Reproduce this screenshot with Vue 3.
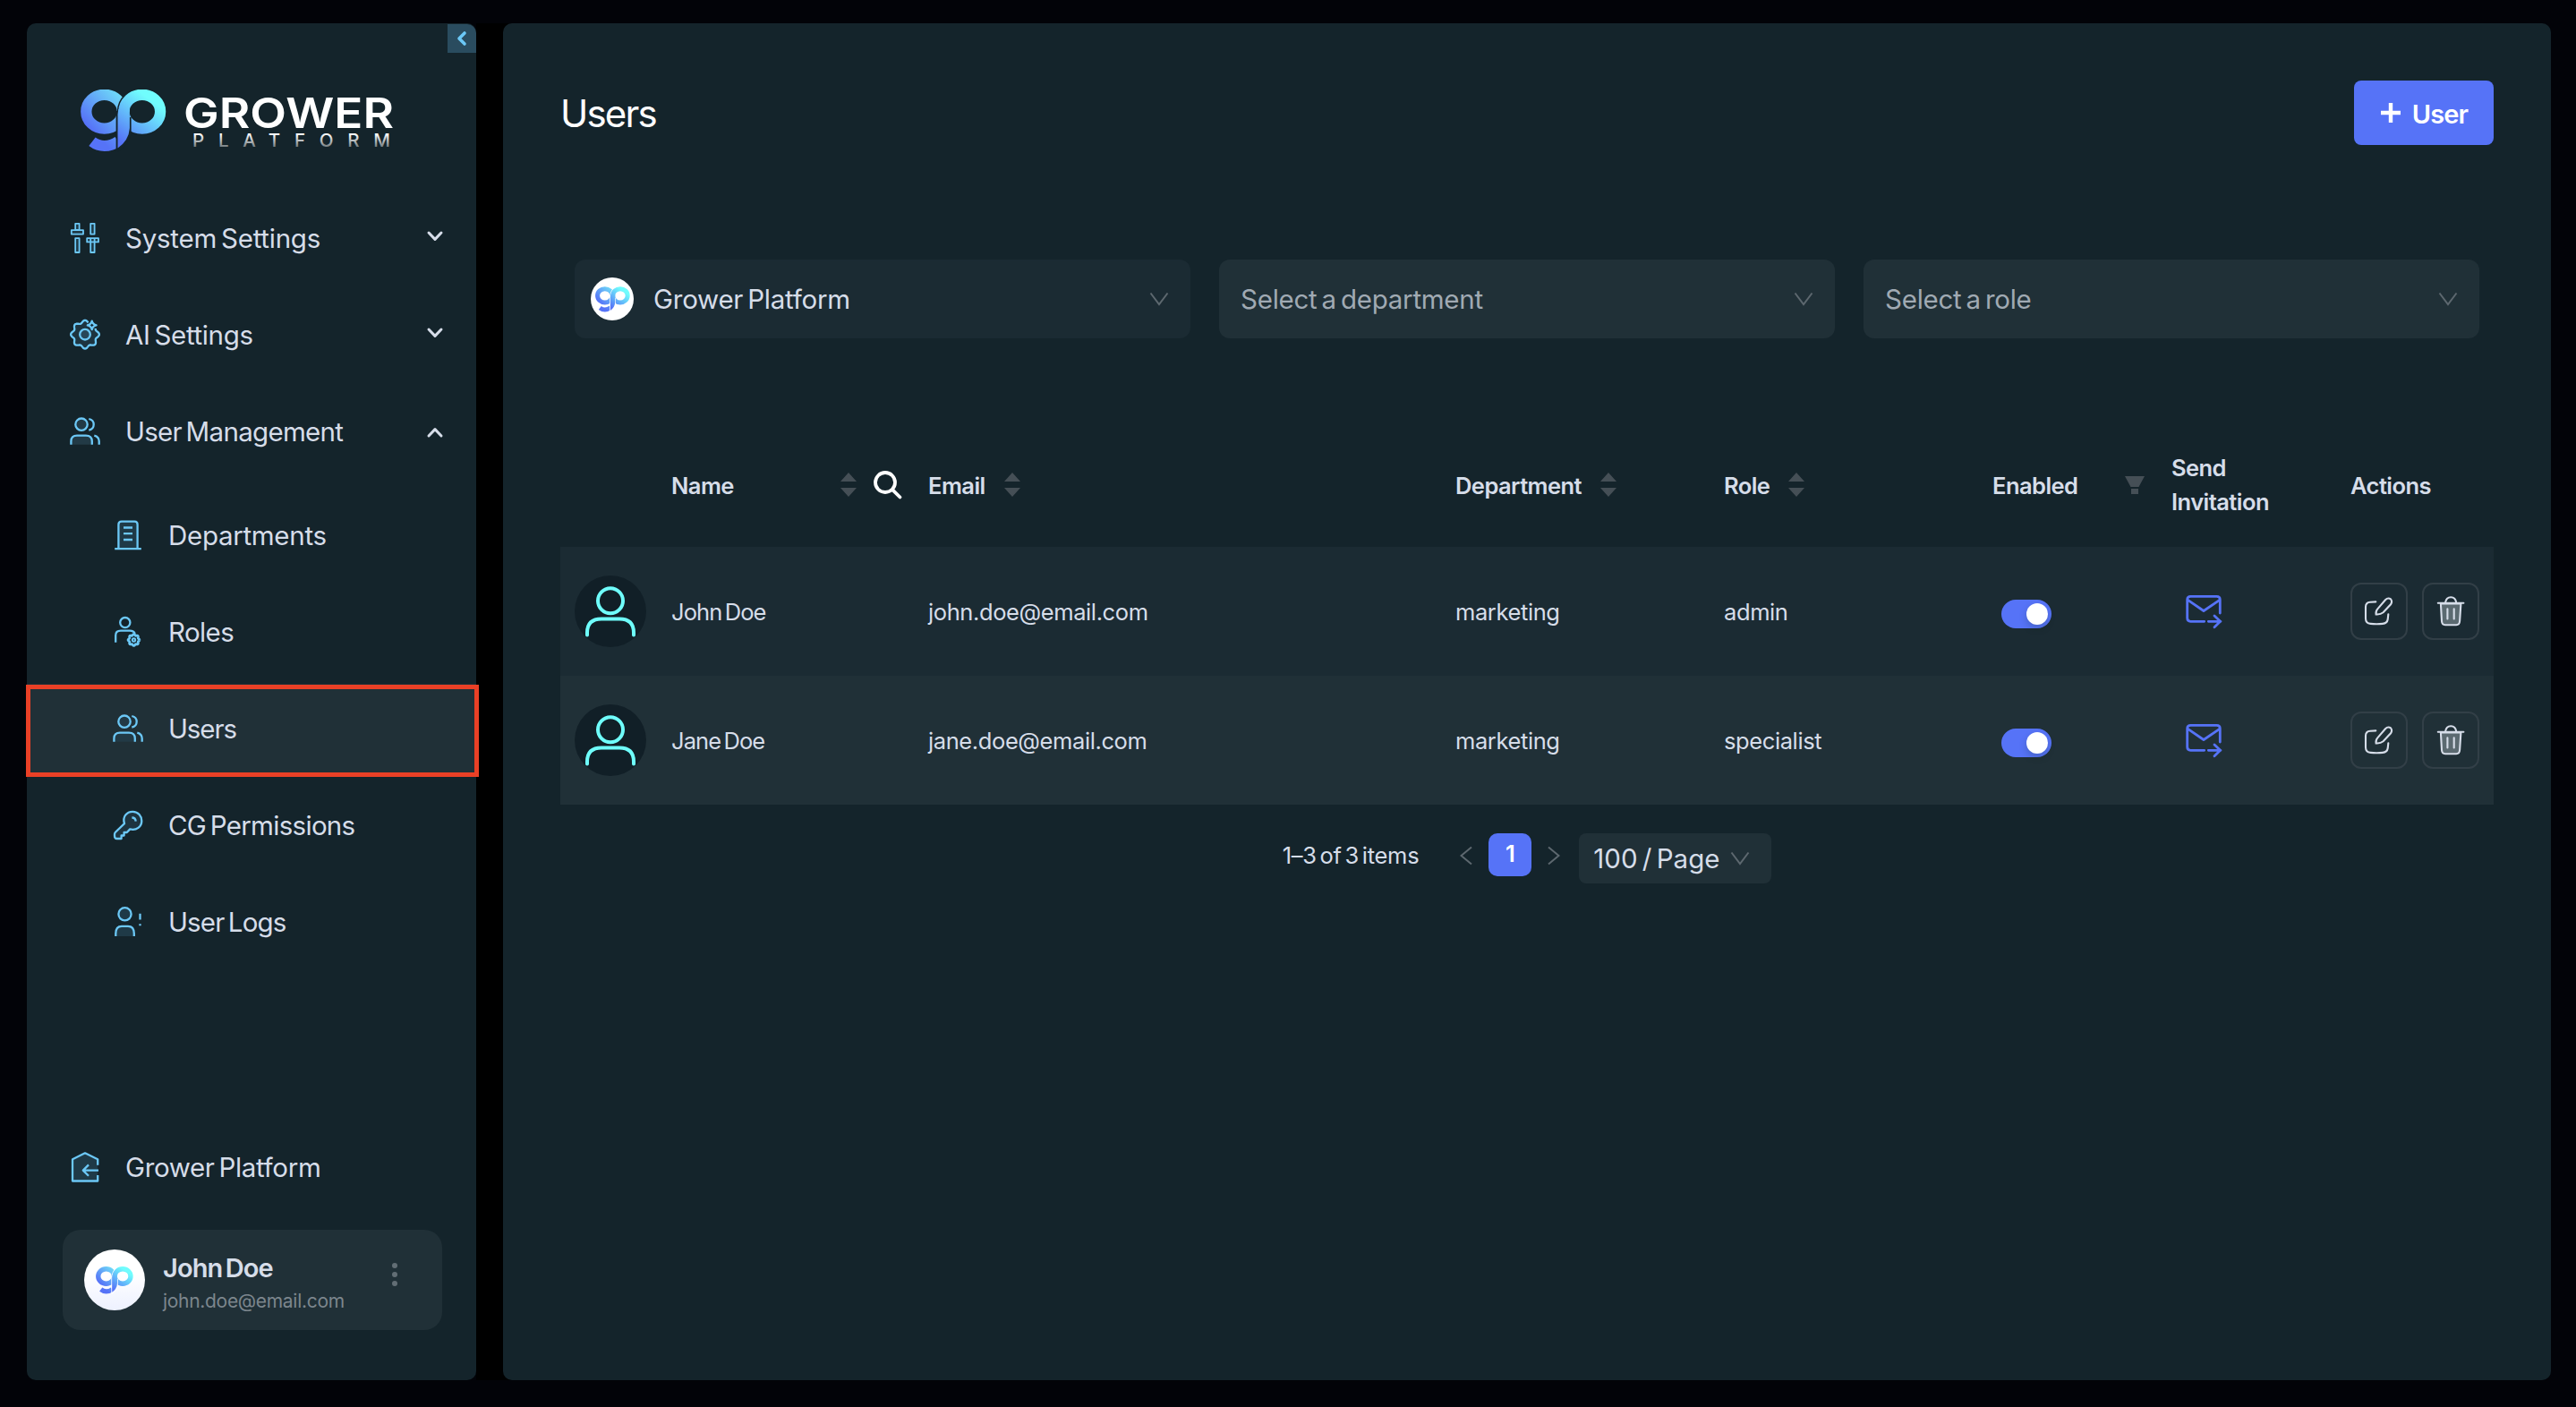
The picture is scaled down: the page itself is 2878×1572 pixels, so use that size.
<template>
  <div class="page">
    <svg class="sprite" aria-hidden="true">
      <defs>
        <linearGradient id="grad-g" gradientUnits="userSpaceOnUse" x1="8" y1="40" x2="46" y2="4">
          <stop offset="0" stop-color="#5673f7" />
          <stop offset="1" stop-color="#70dff8" />
        </linearGradient>
        <linearGradient id="grad-p" gradientUnits="userSpaceOnUse" x1="42" y1="56" x2="76" y2="10">
          <stop offset="0" stop-color="#5673f7" />
          <stop offset="1" stop-color="#70fdfd" />
        </linearGradient>
        <linearGradient id="grad-text" x1="0" y1="0" x2="0" y2="1">
          <stop offset="0.25" stop-color="#ffffff" />
          <stop offset="0.85" stop-color="#6f787c" />
        </linearGradient>
      </defs>

      <symbol id="mark" viewBox="0 0 96 70">
        <g fill="none">
          <ellipse cx="26.6" cy="24.7" rx="20.3" ry="18.9" stroke="url(#grad-g)" stroke-width="12.3" />
          <path d="M13 58.3 C21 64.5 32 64.8 42 58" stroke="url(#grad-g)" stroke-width="12" />
          <ellipse cx="68.8" cy="24.7" rx="20.3" ry="18.9" stroke="currentColor" stroke-width="15.5" />
          <ellipse cx="68.8" cy="24.7" rx="20.3" ry="18.9" stroke="url(#grad-p)" stroke-width="12.3" />
        </g>
        <path d="M39.6 24 H44 V70 H39.6 Z" fill="currentColor" />
        <path d="M44 24.7 H55 V31 H56.6 V50 C54 60 48 66 41 70 Z" fill="currentColor" />
        <path d="M41.5 65.5 V28 L42.3 22 H54.9 V43 Q54 57 41.5 65.5 Z" fill="url(#grad-p)" />
      </symbol>

      <symbol id="sliders" viewBox="0 0 40 40">
        <g stroke-width="1.8" fill="#1f3a47">
          <path d="M9.2 3.8 H13.6 V11 H9.2 Z M9.2 20.2 H13.6 V36 H9.2 Z M4.8 11.2 H18 V15.6 H4.8 Z" />
          <path d="M26.2 3.8 H30.6 V15.6 H26.2 Z M26.2 24.4 H30.6 V36 H26.2 Z M22.2 20.2 H35 V24.4 H22.2 Z M26.2 20.2 V24.4 M30.6 20.2 V24.4" />
        </g>
      </symbol>
      <symbol id="gear" viewBox="0 0 40 40">
        <path :d="bigGear" fill="#1d3440" />
        <circle cx="20" cy="19.7" r="5.8" fill="#28475a" />
        <path d="M27.7 4.6 Q28.5 8.5 32.6 9.4 Q28.5 10.3 27.7 14.2 Q26.9 10.3 22.8 9.4 Q26.9 8.5 27.7 4.6 Z" />
      </symbol>
      <symbol id="users" viewBox="0 0 40 40">
        <circle cx="16" cy="12.2" r="6.7" fill="#223a46" />
        <path d="M4.4 34.7 V31 Q4.4 24.6 11 24.6 H21 Q27.8 24.6 27.8 31 V34.7" fill="#223a46" />
        <path d="M24.3 6 C31.5 7.6 31.5 17 24.3 18.6 M30.3 24.6 Q35.7 26 35.7 31 V34.7" />
      </symbol>
      <symbol id="building" viewBox="0 0 40 40">
        <path d="M9.4 35.2 V8 Q9.4 4.6 12.8 4.6 H27.4 Q30.6 4.6 30.6 8 V35.2" fill="#1f3a47" />
        <path d="M5.2 35.2 H34.8 M15 11.5 H25 M15 18.2 H25 M15 25 H25" />
      </symbol>
      <symbol id="role" viewBox="0 0 40 40">
        <circle cx="16.8" cy="9.6" r="5.6" />
        <path d="M6.2 31.7 V24 Q6.2 18.7 12 18.7 H22 Q26.5 18.7 27.8 22" />
        <path :d="smallGear" stroke-width="2.8" />
        <circle cx="26.5" cy="29" r="1.7" stroke-width="2" />
      </symbol>
      <symbol id="key" viewBox="0 0 40 40">
        <path d="M16 18.2 C13.5 10.5 18.5 4.8 25.3 4.8 C31.5 4.8 35.3 10 35.3 15.2 C35.3 21.5 29.5 26.3 22.2 24.4 L18.8 28 H15.6 V31.5 H12.6 V35 H7.5 Q5 35 5 32 V30 Q5 28.8 6 27.8 Z" fill="#1d3440" />
        <path d="M24.4 11.5 Q28.4 11.5 28.7 15.6" />
      </symbol>
      <symbol id="log" viewBox="0 0 40 40">
        <circle cx="16.5" cy="11.3" r="7.1" fill="#1f3a47" />
        <path d="M6.3 36 V33 Q6.3 24.8 13 24.8 H20 Q26.8 24.8 26.8 33 V36" fill="#1f3a47" />
        <path d="M33.5 10.7 V17.4 M33.5 22.3 V24.3" />
      </symbol>
      <symbol id="home" viewBox="0 0 40 40">
        <path d="M34.2 17.8 V11.2 L20 4.3 L6 11.2 V35.5 H34.2 V29" fill="#1f3a47" />
        <path d="M35 23.6 H18 M24 17.4 L17.8 23.6 L24 29.8" />
      </symbol>
    </svg>

    <aside class="sidebar">
      <button class="collapse">
        <svg width="14" height="18" viewBox="0 0 14 18"><path d="M10 3 L4 9 L10 15" stroke="#6cc8f6" stroke-width="3.6" stroke-linecap="round" stroke-linejoin="round" fill="none" /></svg>
      </button>

      <div class="logo">
        <svg class="logo-mark" width="96" height="70"><use href="#mark" /></svg>
        <svg class="logo-text" width="240" height="70" viewBox="0 0 240 70">
          <text class="logo-name" x="1" y="43" textLength="235" lengthAdjust="spacingAndGlyphs">GROWER</text>
          <text class="logo-sub" x="11" y="63.5" textLength="221">PLATFORM</text>
        </svg>
      </div>

      <nav>
        <div v-for="item in menu" :key="item.label" class="item">
          <svg class="icon" width="40" height="40"><use :href="'#' + item.icon" /></svg>
          <span class="label" :style="{ letterSpacing: item.tracking + 'px' }">{{ item.label }}</span>
          <svg class="caret" :class="{ open: item.open }" width="20" height="14" viewBox="0 0 20 14">
            <path d="M3 3 L10 10.4 L17 3" />
          </svg>
        </div>
        <div class="submenu">
          <div v-for="item in submenu" :key="item.label" class="item sub" :class="{ active: item.active }">
            <svg class="icon" width="40" height="40"><use :href="'#' + item.icon" /></svg>
            <span class="label" :style="{ letterSpacing: item.tracking + 'px' }">{{ item.label }}</span>
          </div>
        </div>
      </nav>

      <div class="bottom">
        <div class="item">
          <svg class="icon" width="40" height="40"><use href="#home" /></svg>
          <span class="label">Grower Platform</span>
        </div>
        <div class="profile">
          <span class="brand-avatar large"><svg width="42" height="31"><use href="#mark" /></svg></span>
          <div class="profile-text">
            <strong>John Doe</strong>
            <small>john.doe@email.com</small>
          </div>
          <svg class="dots" width="8" height="28" viewBox="0 0 8 28">
            <circle cx="4" cy="4" r="3" /><circle cx="4" cy="14" r="3" /><circle cx="4" cy="24" r="3" />
          </svg>
        </div>
      </div>
    </aside>

    <main class="content">
      <header class="title-bar">
        <h1>Users</h1>
        <button class="add">
          <svg width="24" height="24" viewBox="0 0 24 24"><path d="M12 1 V23 M1 12 H23" stroke="#fff" stroke-width="4.4" /></svg>
          <span>User</span>
        </button>
      </header>

      <div class="filters">
        <div v-for="f in filters" :key="f.text" class="select" :class="{ chosen: f.chosen }">
          <span v-if="f.chosen" class="brand-avatar"><svg width="39" height="29"><use href="#mark" /></svg></span>
          <span class="select-text">{{ f.text }}</span>
          <svg class="arrow" width="22" height="16" viewBox="0 0 22 16"><path d="M1.5 1.5 L11 14 L20.5 1.5" /></svg>
        </div>
      </div>

      <div class="table">
        <div class="row head">
          <div></div>
          <div class="name-head">
            <span>Name</span>
            <svg class="sorter" width="18" height="28" viewBox="0 0 18 28"><path d="M9 0 L18 10 H0 Z M9 27 L18 17 H0 Z" /></svg>
            <svg class="search" width="34" height="34" viewBox="0 0 34 34"><circle cx="14" cy="14" r="11" /><path d="M22.3 22.3 L30.5 30.5" /></svg>
          </div>
          <div v-for="c in sortable" :key="c">
            <span>{{ c }}</span>
            <svg class="sorter" width="18" height="28" viewBox="0 0 18 28"><path d="M9 0 L18 10 H0 Z M9 27 L18 17 H0 Z" /></svg>
          </div>
          <div class="enabled-head">
            <span>Enabled</span>
            <svg width="22" height="20" viewBox="0 0 22 20"><path d="M0 0 H22 L15.5 12 H6.5 Z M7 14 H15 V20 H7 Z" fill="#454f56" /></svg>
          </div>
          <div class="send-head">Send<br />Invitation</div>
          <div>Actions</div>
        </div>

        <div v-for="user in users" :key="user.email" class="row">
          <div>
            <svg class="avatar" width="80" height="80" viewBox="0 0 80 80">
              <circle cx="40" cy="40" r="40" fill="#111f27" />
              <circle cx="40" cy="28.2" r="14" />
              <path d="M14 66.5 V64 Q14 48.6 30 48.6 H50 Q66 48.6 66 64 V66.5" />
            </svg>
          </div>
          <div class="user-name">{{ user.name }}</div>
          <div>{{ user.email }}</div>
          <div>{{ user.department }}</div>
          <div>{{ user.role }}</div>
          <div><span class="toggle"><i></i></span></div>
          <div>
            <svg class="send" width="44" height="44" viewBox="0 0 44 44">
              <path d="M40.3 24 V9 Q40.3 5.3 36.6 5.3 H7.4 Q3.7 5.3 3.7 9 V29.6 Q3.7 33.3 7.4 33.3 H22.7" />
              <path d="M4.7 9.6 L22 21.5 L39.5 9.6 M27.3 33.3 H41 M34 27 L40.6 33.3 L34 39.8" />
            </svg>
          </div>
          <div class="actions">
            <button>
              <svg width="60" height="60" viewBox="2 2 60 60">
                <path d="M28.3 21.4 L22 21.7 Q17 22 17 27 V40 Q17 45.4 22.5 45.9 Q29 46.6 36 45.9 Q41 45.4 41.7 41 L42.3 35.3" />
                <path d="M28.6 35.4 Q28 32 30.3 29.4 L39 19.3 Q42 16.2 45 18.4 Q47.2 21 45 24.3 L36.6 33.2 Q33.5 35.8 28.6 35.4 Z" />
              </svg>
            </button>
            <button>
              <svg width="60" height="60" viewBox="2 2 60 60">
                <path d="M20.9 23.4 L22 43 Q22.3 47.2 26 47.2 H38.2 Q41.8 47.2 42.1 43 L43.4 23.4 Z" fill="#5b6a71" />
                <path d="M17.8 22.8 H46.4 M26 22.4 Q27 16.3 32.2 16.3 Q37.3 16.3 38.3 22.4 M28.4 29.3 V40.5 M35.7 29.3 V40.5" />
              </svg>
            </button>
          </div>
        </div>
      </div>

      <div class="pagination">
        <span class="total">1–3 of 3 items</span>
        <svg class="arrow" width="14" height="22" viewBox="0 0 14 22"><path d="M13 1.5 L1.5 11 L13 20.5" /></svg>
        <span class="current">1</span>
        <svg class="arrow" width="14" height="22" viewBox="0 0 14 22"><path d="M1 1.5 L12.5 11 L1 20.5" /></svg>
        <div class="page-size">
          <span>100 / Page</span>
          <svg class="arrow" width="22" height="16" viewBox="0 0 22 16"><path d="M1.5 1.5 L11 14 L20.5 1.5" /></svg>
        </div>
      </div>
    </main>
  </div>
</template>

<script setup>
const menu = [
  { label: 'System Settings', icon: 'sliders', tracking: -0.25 },
  { label: 'AI Settings', icon: 'gear', tracking: -0.35 },
  { label: 'User Management', icon: 'users', tracking: -0.7, open: true },
];

const submenu = [
  { label: 'Departments', icon: 'building', tracking: -0.3 },
  { label: 'Roles', icon: 'role', tracking: -0.6 },
  { label: 'Users', icon: 'users', tracking: -1.1, active: true },
  { label: 'CG Permissions', icon: 'key', tracking: -0.7 },
  { label: 'User Logs', icon: 'log', tracking: -0.85 },
];

const filters = [
  { text: 'Grower Platform', chosen: true },
  { text: 'Select a department' },
  { text: 'Select a role' },
];

const sortable = ['Email', 'Department', 'Role'];

const users = [
  { name: 'John Doe', email: 'john.doe@email.com', department: 'marketing', role: 'admin' },
  { name: 'Jane Doe', email: 'jane.doe@email.com', department: 'marketing', role: 'specialist' },
];

// wavy outline with eight teeth, angles in degrees
const gearPath = (cx, cy, r, amp, from, to) => {
  const points = [];
  for (let a = from; a <= to; a += 3) {
    const t = (a * Math.PI) / 180;
    const d = r + amp * Math.cos(8 * t);
    points.push(`${(cx + d * Math.cos(t)).toFixed(2)} ${(cy + d * Math.sin(t)).toFixed(2)}`);
  }
  return 'M' + points.join(' L');
};

const bigGear = gearPath(20, 19.7, 14.4, 1.5, -30, 285);
const smallGear = gearPath(26.5, 29, 5.8, 0.6, 0, 360);
</script>

<style>
body {
  background: #020308;
}
</style>

<style scoped>
.page {
  box-sizing: border-box;
  width: 2878px;
  height: 1572px;
  padding: 26px 28px 30px 30px;
  display: flex;
  background: linear-gradient(#000, #000) 532px 26px / 40px 1516px no-repeat #020308;
  font-family: Inter, "Liberation Sans", sans-serif;
  font-size: 29.5px;
  color: #d6dde9;
  word-spacing: -3px;
}

.page * {
  box-sizing: border-box;
}

.sprite {
  position: absolute;
  width: 0;
  height: 0;
}

button {
  font: inherit;
  color: inherit;
  border: none;
  background: none;
  padding: 0;
}

.sidebar {
  position: relative;
  width: 502px;
  border-radius: 10px;
  background: #14242b;
  display: flex;
  flex-direction: column;
  padding-top: 74px;
  margin-right: 30px;
}

.collapse {
  position: absolute;
  top: 1px;
  right: 0;
  width: 32px;
  height: 32px;
  background: #2a4c5f;
  border-top-right-radius: 10px;
  display: flex;
  align-items: center;
  justify-content: center;
}

.logo {
  display: flex;
  gap: 18px;
  padding-left: 60px;
  height: 70px;
  margin-bottom: 46px;
}

.logo-mark {
  color: #14242b;
}

.logo-text {
  overflow: visible;
}

.logo-name {
  font-size: 47px;
  font-weight: 600;
  fill: #fff;
}

.logo-sub {
  font-size: 20.5px;
  font-weight: 500;
  fill: url(#grad-text);
}

.item {
  position: relative;
  height: 100px;
  margin-bottom: 8px;
  padding: 0 36px 0 45px;
  display: flex;
  align-items: center;
}

.icon {
  margin-right: 25px;
  fill: none;
  stroke: #6cc8f6;
  stroke-width: 2.3;
  stroke-linejoin: round;
}

.label {
  flex: 1;
  white-space: nowrap;
  letter-spacing: -0.35px;
}

.caret {
  fill: none;
  stroke: #d6dde9;
  stroke-width: 3;
  stroke-linecap: round;
  stroke-linejoin: round;
  position: relative;
  top: -2px;
}

.caret.open {
  transform: rotate(180deg);
  top: 1px;
}

.submenu {
  margin-top: 16px;
}

.sub {
  padding-left: 93px;
}

.active {
  background: #203037;
}

.active::after {
  content: "";
  box-sizing: border-box;
  position: absolute;
  left: -1px;
  top: 1px;
  width: 506px;
  height: 103px;
  border: 5px solid #ea4026;
  background: linear-gradient(#203037, #203037) bottom / 100% 6px no-repeat;
}

.bottom {
  margin-top: auto;
  padding-bottom: 56px;
}

.bottom .item {
  margin-bottom: 20px;
}

.profile {
  width: 424px;
  height: 112px;
  margin-left: 40px;
  padding: 0 49px 0 24px;
  border-radius: 20px;
  background: #203037;
  display: flex;
  align-items: center;
}

.brand-avatar {
  width: 48px;
  height: 48px;
  border-radius: 50%;
  background: #fff;
  color: #fff;
  display: flex;
  align-items: center;
  justify-content: center;
  flex: none;
}

.brand-avatar.large {
  width: 68px;
  height: 68px;
  background: linear-gradient(#fff 40%, #edf1ff);
}

.profile-text {
  flex: 1;
  margin: 10px 0 0 20px;
  display: flex;
  flex-direction: column;
}

.profile-text strong {
  font-weight: 600;
  font-size: 29px;
  line-height: 38px;
  letter-spacing: -0.9px;
}

.profile-text small {
  font-size: 21px;
  line-height: 36px;
  letter-spacing: -0.3px;
  color: #7c868d;
}

.dots {
  fill: #626e75;
  position: relative;
  top: -6px;
}

.content {
  width: 2288px;
  border-radius: 10px;
  background: #14242b;
  padding: 64px;
}

.title-bar {
  display: flex;
  justify-content: space-between;
  align-items: center;
  height: 72px;
}

h1 {
  margin: 0;
  font-size: 42px;
  font-weight: 400;
  letter-spacing: -1.8px;
  color: #fff;
}

.add {
  width: 156px;
  height: 72px;
  border-radius: 8px;
  background: #5673f7;
  color: #fff;
  font-weight: 600;
  font-size: 29px;
  letter-spacing: -0.9px;
  display: flex;
  align-items: center;
  justify-content: center;
  gap: 12px;
}

.add span {
  padding-top: 2px;
}

.filters {
  display: flex;
  gap: 32px;
  margin-top: 128px;
  padding: 0 16px;
}

.select {
  width: 688px;
  height: 88px;
  border-radius: 12px;
  background: #203037;
  padding: 0 24px;
  display: flex;
  align-items: center;
  color: #a0aab3;
}

.select.chosen {
  background: #1b2b33;
  color: #d6dde9;
  padding-left: 18px;
}

.chosen .brand-avatar {
  margin-right: 22px;
}

.select-text {
  flex: 1;
  letter-spacing: -0.25px;
}

.arrow {
  fill: none;
  stroke: #5d686f;
  stroke-width: 2;
}

.table {
  margin-top: 95px;
  font-size: 25.5px;
  letter-spacing: -0.4px;
}

.row {
  display: grid;
  grid-template-columns: 108px 287px 589px 300px 300px 200px 200px 176px;
  height: 144px;
  background: #1b2b33;
}

.row:nth-child(odd) {
  background: #203037;
}

.row.head {
  height: 138px;
  background: none;
  font-weight: 600;
  letter-spacing: -0.55px;
}

.row > div {
  padding-left: 16px;
  display: flex;
  align-items: center;
}

.row .user-name {
  letter-spacing: -0.9px;
}

.sorter {
  fill: #454f56;
  margin-left: 21px;
}

.name-head .sorter {
  margin-left: auto;
  margin-right: 18px;
}

.row .name-head {
  padding-right: 12px;
}

.search {
  fill: none;
  stroke: #fff;
  stroke-width: 3.8;
  stroke-linecap: round;
}

.row .enabled-head {
  justify-content: space-between;
  padding-right: 14px;
}

.row .send-head {
  display: block;
  line-height: 38px;
  padding-top: 31px;
}

.avatar {
  fill: none;
  stroke: #6ffdfb;
  stroke-width: 4;
  stroke-linecap: round;
  flex: none;
}

.avatar circle:first-child {
  stroke: none;
}

.toggle {
  width: 56px;
  height: 32px;
  margin: 6px 0 0 10px;
  border-radius: 16px;
  background: #5673f7;
  display: flex;
  justify-content: flex-end;
  padding: 4px;
}

.toggle i {
  width: 24px;
  height: 24px;
  border-radius: 50%;
  background: #fff;
  box-shadow: 0 4px 8px rgba(0, 35, 11, 0.2);
}

.send {
  margin-left: 14px;
  fill: none;
  stroke: #5673f7;
  stroke-width: 2.8;
  stroke-linecap: round;
  stroke-linejoin: round;
}

.actions {
  gap: 16px;
}

.actions button {
  width: 64px;
  height: 64px;
  border: 2px solid #323f47;
  border-radius: 12px;
  flex: none;
}

.actions svg {
  display: block;
  fill: none;
  stroke: #d6dde9;
  stroke-width: 2.1;
  stroke-linecap: round;
}

.pagination {
  display: flex;
  justify-content: center;
  align-items: flex-start;
  height: 56px;
  margin-top: 32px;
  font-size: 25.5px;
}

.pagination > .arrow {
  margin-top: 14px;
}

.total {
  line-height: 50px;
  margin-right: 46px;
  letter-spacing: -0.3px;
}

.current {
  width: 48px;
  height: 48px;
  margin: 0 18px;
  border-radius: 10px;
  background: #5673f7;
  color: #fff;
  font-weight: 600;
  line-height: 46px;
  text-align: center;
}

.page-size {
  width: 215px;
  height: 56px;
  margin-left: 21px;
  padding: 0 24px 0 16px;
  border-radius: 8px;
  background: #203037;
  font-size: 29.5px;
  display: flex;
  align-items: center;
  justify-content: space-between;
}
</style>
